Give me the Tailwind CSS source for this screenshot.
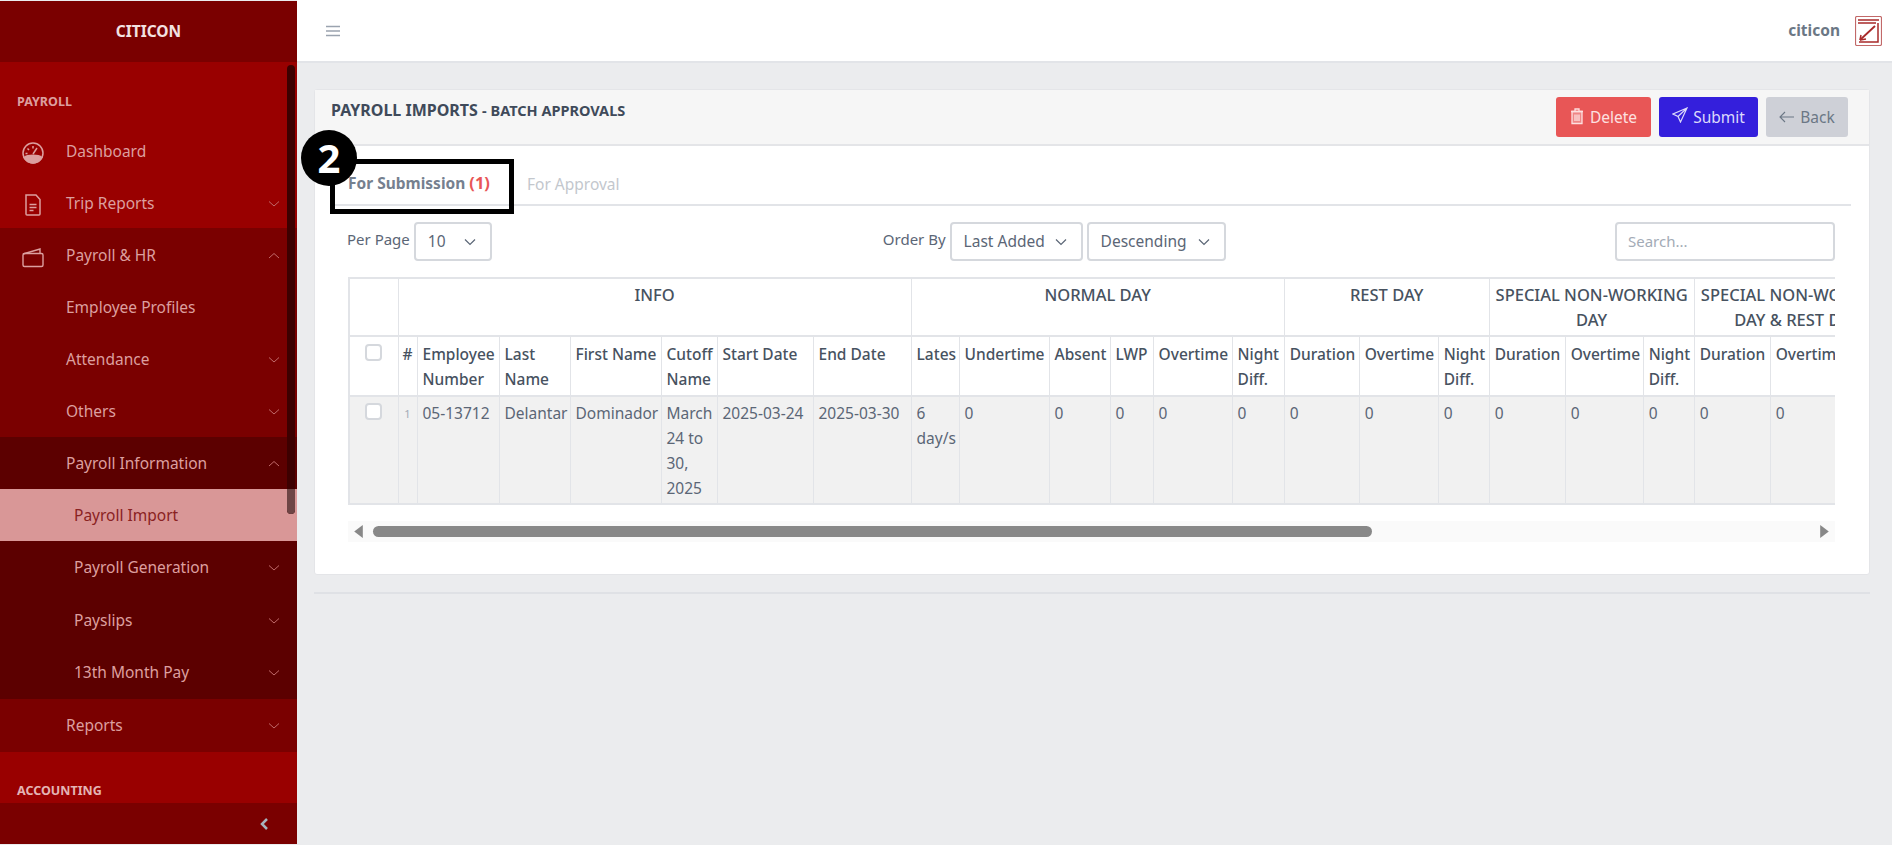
<!DOCTYPE html>
<html lang="en">
<head>
  <meta charset="UTF-8" />
  <title>Payroll Imports</title>
  <script src="https://cdn.jsdelivr.net/npm/@tailwindcss/browser@4"></script>
</head>
<body class="bg-[#ebecee] font-['Noto_Sans',sans-serif] h-[845px] w-[1892px] overflow-hidden">
  <div class="flex h-[845px]">

    <!-- Sidebar -->
    <aside class="relative w-[297px] shrink-0 h-[843px] mt-px bg-[#990000] text-[15.5px] text-[#dc9f9f] overflow-hidden">
      <div class="h-[61px] bg-[#7a0000] flex items-center justify-center font-bold text-[#f3e2e2] text-[15.5px]">CITICON</div>

      <div class="h-[62px] pl-[17px] pt-[32px] text-[12.5px] font-bold leading-[16px]">PAYROLL</div>
      <a class="h-[52px] pt-[3px] flex items-center">
        <svg class="w-[24px] h-[24px] ml-[21px] mr-[21px] mt-[3px]" viewBox="0 0 24 24" fill="none" stroke="currentColor" stroke-width="1.5">
          <circle cx="12" cy="12" r="10" />
          <path d="M3 16.500c4-3 14-3 18 0-2 3.500-5 5.500-9 5.500s-7-2-9-5.500z" fill="currentColor" />
          <path d="M12 13l4-6M12 5v2.500M6.500 7.500l1.500 1.500M4.500 12.500h2" />
        </svg>
        <span>Dashboard</span>
      </a>
      <a class="h-[52px] pt-[3px] flex items-center">
        <svg class="w-[24px] h-[24px] ml-[21px] mr-[21px] mt-[3px]" viewBox="0 0 24 24" fill="none" stroke="currentColor" stroke-width="1.5">
          <path d="M5 2h10l4 4.500V21a1 1 0 0 1-1 1H6a1 1 0 0 1-1-1z" />
          <path d="M8.500 11.500h7M8.500 14.500h7M8.500 17.500h4" />
        </svg>
        <span>Trip Reports</span>
        <svg class="ml-auto mr-[16px] w-[14px] h-[14px] text-[#c06a6a]" viewBox="0 0 14 14" fill="none" stroke="currentColor"><path d="M2 4.500l5 4.500 5-4.500" /></svg>
      </a>

      <div class="bg-[#7a0000]">
        <a class="h-[52px] pt-[3px] flex items-center">
          <svg class="w-[24px] h-[24px] ml-[21px] mr-[21px] mt-[3px]" viewBox="0 0 24 24" fill="none" stroke="currentColor" stroke-width="1.4">
            <path d="M2 9l17-5v4" />
            <rect x="2" y="8.500" width="20" height="13" rx="1.500" />
          </svg>
          <span>Payroll &amp; HR</span>
          <svg class="ml-auto mr-[16px] w-[14px] h-[14px] text-[#c06a6a]" viewBox="0 0 14 14" fill="none" stroke="currentColor"><path d="M2 9l5-4.500 5 4.500" /></svg>
        </a>
        <a class="h-[52px] pt-[3px] flex items-center pl-[66px]">Employee Profiles</a>
        <a class="h-[52px] pt-[3px] flex items-center pl-[66px]">
          <span>Attendance</span>
          <svg class="ml-auto mr-[16px] w-[14px] h-[14px] text-[#c06a6a]" viewBox="0 0 14 14" fill="none" stroke="currentColor"><path d="M2 4.500l5 4.500 5-4.500" /></svg>
        </a>
        <a class="h-[53px] pt-[3px] flex items-center pl-[66px]">
          <span>Others</span>
          <svg class="ml-auto mr-[16px] w-[14px] h-[14px] text-[#c06a6a]" viewBox="0 0 14 14" fill="none" stroke="currentColor"><path d="M2 4.500l5 4.500 5-4.500" /></svg>
        </a>

        <div class="bg-[#5c0000]">
          <a class="h-[52px] pt-[2px] flex items-center pl-[66px]">
            <span>Payroll Information</span>
            <svg class="ml-auto mr-[16px] w-[14px] h-[14px] text-[#c06a6a]" viewBox="0 0 14 14" fill="none" stroke="currentColor"><path d="M2 9l5-4.500 5 4.500" /></svg>
          </a>
          <a class="h-[52px] pt-[2px] flex items-center pl-[74px] bg-[#d99797] text-[#8a2222]">Payroll Import</a>
          <a class="h-[53px] flex items-center pl-[74px]">
            <span>Payroll Generation</span>
            <svg class="ml-auto mr-[16px] w-[14px] h-[14px] text-[#c06a6a]" viewBox="0 0 14 14" fill="none" stroke="currentColor"><path d="M2 4.500l5 4.500 5-4.500" /></svg>
          </a>
          <a class="h-[52px] pt-[2px] flex items-center pl-[74px]">
            <span>Payslips</span>
            <svg class="ml-auto mr-[16px] w-[14px] h-[14px] text-[#c06a6a]" viewBox="0 0 14 14" fill="none" stroke="currentColor"><path d="M2 4.500l5 4.500 5-4.500" /></svg>
          </a>
          <a class="h-[53px] flex items-center pl-[74px]">
            <span>13th Month Pay</span>
            <svg class="ml-auto mr-[16px] w-[14px] h-[14px] text-[#c06a6a]" viewBox="0 0 14 14" fill="none" stroke="currentColor"><path d="M2 4.500l5 4.500 5-4.500" /></svg>
          </a>
        </div>

        <a class="h-[53px] flex items-center pl-[66px]">
          <span>Reports</span>
          <svg class="ml-auto mr-[16px] w-[14px] h-[14px] text-[#c06a6a]" viewBox="0 0 14 14" fill="none" stroke="currentColor"><path d="M2 4.500l5 4.500 5-4.500" /></svg>
        </a>
      </div>

      <div class="pl-[17px] pt-[31px] text-[12.5px] font-bold leading-[16px] text-[#e4b4b4]">ACCOUNTING</div>

      <!-- pinned collapse bar -->
      <div class="absolute bottom-0 left-0 right-0 h-[41px] bg-[#7a0000] flex items-center justify-end pr-[27px]">
        <svg class="w-[12px] h-[14px] text-[#a7b3bd]" viewBox="0 0 12 14" fill="none" stroke="currentColor" stroke-width="2.500"><path d="M9 2L4 7l5 5" /></svg>
      </div>

      <!-- sidebar scrollbar -->
      <div class="absolute top-[64px] right-[2px] w-[8px] h-[449px] rounded-full bg-[#3d0000]"></div>
      <div class="absolute top-[488px] right-[2px] w-[8px] h-[25px] rounded-b-full bg-[#6e4545]"></div>
    </aside>

    <!-- Main -->
    <main class="flex-1 min-w-0 flex flex-col">
      <header class="h-[63px] shrink-0 bg-white border-b-2 border-[#e2e4e8] flex items-center pl-[29px] pr-[10px]">
        <svg class="w-[14px] h-[12px] text-[#9aa3af]" viewBox="0 0 14 12" fill="none" stroke="currentColor" stroke-width="1.500"><path d="M0 1.500h14M0 6h14M0 10.500h14" /></svg>
        <span class="ml-auto font-bold text-[#6b7785] text-[15.5px]">citicon</span>
        <svg class="ml-[15px] w-[27px] h-[30px] text-[#a82a2a]" viewBox="0 0 27 30" fill="none" stroke="currentColor">
          <rect x="0.500" y="0.500" width="26" height="29" rx="1.500" stroke-width="1.200" stroke-opacity="0.700" />
          <path d="M3 4h21M3 7h18M23 7v19H4" stroke-width="1.500" />
          <path d="M5 24L20 10" stroke-width="1.800" />
          <path d="M5 24l1-5M5 24l6-1" stroke-width="1.500" />
        </svg>
      </header>

      <div class="pt-[26px] pl-[17px] pr-[22px]">
        <section class="h-[486px] bg-white rounded-[3px] border border-[#e4e5e8]">
          <div class="h-[56px] bg-[#f6f6f6] border-b-2 border-[#e4e5e8] flex pl-[16px] pr-[21px] pt-[7px]">
            <h1 class="font-bold text-[#3f4a5a] text-[16px] leading-[20px] pt-[3px]">PAYROLL IMPORTS <span class="text-[14.5px]">- BATCH APPROVALS</span></h1>
            <div class="ml-auto flex gap-[8px] text-[15.5px]">
              <button class="h-[40px] w-[95px] pt-[2px] rounded-[3px] bg-[#e85656] text-[#fde0e0] flex items-center justify-center gap-[6px]">
                <svg class="w-[14px] h-[18px] -mt-[5px]" viewBox="0 0 14 17" fill="none" stroke="currentColor" stroke-width="1.300">
                  <path d="M1 4h12M5 4V1.500h4V4" />
                  <path d="M2 4h10v12H2z" fill="currentColor" fill-opacity="0.350" />
                  <path d="M5 7v6.500M7 7v6.500M9 7v6.500" />
                </svg>
                Delete
              </button>
              <button class="h-[40px] w-[99px] pt-[2px] rounded-[3px] bg-[#341fdc] text-[#dcd9fb] flex items-center justify-center gap-[5px]">
                <svg class="w-[16px] h-[16px] -mt-[6px]" viewBox="0 0 16 16" fill="none" stroke="currentColor" stroke-width="1.200">
                  <path d="M15 1L1 7l5 2.500 2.500 5.500zM15 1L6 9.500" />
                </svg>
                Submit
              </button>
              <button class="h-[40px] w-[82px] pt-[2px] rounded-[3px] bg-[#ced0d7] text-[#6b7785] flex items-center justify-center gap-[6px]">
                <svg class="w-[15px] h-[12px] -mt-[2px]" viewBox="0 0 15 12" fill="none" stroke="currentColor" stroke-width="1.100"><path d="M15 6H1M6 1L1 6l5 5" /></svg>
                Back
              </button>
            </div>
          </div>

          <div class="relative pl-[16px] pr-[18px]">
            <!-- tabs -->
            <div class="h-[60px] border-b-2 border-[#e2e4e8] flex items-end text-[15.5px]">
              <span class="pl-[17px] pb-[8px] w-[196px] font-bold text-[#75808f]">For Submission <span class="text-[16.5px] text-[#e85656]">(1)</span></span>
              <span class="pb-[8px] text-[#c3c7cd]">For Approval</span>
            </div>

            <!-- annotation over the tab -->
            <div class="absolute top-[13px] left-[15px] w-[184px] h-[55px] border-[5px] border-black"></div>
            <div class="absolute -top-[16px] -left-[14px] w-[56px] h-[56px] rounded-full bg-black text-white flex items-center justify-center font-bold text-[40px] leading-none">2</div>

            <!-- filters -->
            <div class="flex items-center h-[38px] mt-[16px] ml-[17px] mr-[16px] text-[15px] text-[#5b6676]">
              <span class="-mt-[3px] mr-[4px] -ml-px">Per Page</span>
              <div class="w-[78px] h-[39px] pt-[2px] border-2 border-[#d5d8dd] rounded-[4px] flex items-center pl-[12px] pr-[14px] text-[15.5px]">
                <span>10</span>
                <svg class="ml-auto w-[12px] h-[8px]" viewBox="0 0 12 8" fill="none" stroke="currentColor" stroke-width="1.200"><path d="M1 1.500l5 5 5-5" /></svg>
              </div>
              <span class="ml-[391px] -mt-[3px] mr-[4px]">Order By</span>
              <div class="w-[133px] h-[39px] pt-[2px] border-2 border-[#d5d8dd] rounded-[4px] flex items-center pl-[12px] pr-[14px] text-[15.5px]">
                <span>Last Added</span>
                <svg class="ml-auto w-[12px] h-[8px]" viewBox="0 0 12 8" fill="none" stroke="currentColor" stroke-width="1.200"><path d="M1 1.500l5 5 5-5" /></svg>
              </div>
              <div class="ml-[4px] w-[139px] h-[39px] pt-[2px] border-2 border-[#d5d8dd] rounded-[4px] flex items-center pl-[12px] pr-[14px] text-[15.5px]">
                <span>Descending</span>
                <svg class="ml-auto w-[12px] h-[8px]" viewBox="0 0 12 8" fill="none" stroke="currentColor" stroke-width="1.200"><path d="M1 1.500l5 5 5-5" /></svg>
              </div>
              <div class="ml-auto w-[220px] h-[39px] border-2 border-[#d5d8dd] rounded-[4px] flex items-center pl-[11px] text-[#a3abb6]">Search...</div>
            </div>

            <!-- table -->
            <div class="mt-[17px] ml-[17px] mr-[16px] overflow-hidden">
              <table class="table-fixed border-collapse w-[1551px] text-[15.5px] leading-[25px] text-[#5b6676] border-2 border-[#e2e4e8]">
                <colgroup>
                  <col class="w-[49px]" />
                  <col class="w-[19px]" />
                  <col class="w-[82px]" />
                  <col class="w-[71px]" />
                  <col class="w-[91px]" />
                  <col class="w-[56px]" />
                  <col class="w-[96px]" />
                  <col class="w-[98px]" />
                  <col class="w-[48px]" />
                  <col class="w-[90px]" />
                  <col class="w-[61px]" />
                  <col class="w-[43px]" />
                  <col class="w-[79px]" />
                  <col class="w-[52px]" />
                  <col class="w-[75px]" />
                  <col class="w-[79px]" />
                  <col class="w-[51px]" />
                  <col class="w-[76px]" />
                  <col class="w-[78px]" />
                  <col class="w-[51px]" />
                  <col class="w-[76px]" />
                  <col class="w-[79px]" />
                  <col class="w-[51px]" />
                </colgroup>
                <thead class="text-[#47525f] font-medium">
                  <tr class="h-[58px] align-top text-center text-[16.5px]">
                    <th class="border border-[#e2e4e8] font-medium"></th>
                    <th colspan="7" class="border border-[#e2e4e8] font-medium pt-[3px]">INFO</th>
                    <th colspan="6" class="border border-[#e2e4e8] font-medium pt-[3px]">NORMAL DAY</th>
                    <th colspan="3" class="border border-[#e2e4e8] font-medium pt-[3px]">REST DAY</th>
                    <th colspan="3" class="border border-[#e2e4e8] font-medium pt-[3px]">SPECIAL NON-WORKING DAY</th>
                    <th colspan="3" class="border border-[#e2e4e8] font-medium pt-[3px]">SPECIAL NON-WORKING DAY &amp; REST DAY</th>
                  </tr>
                  <tr class="h-[60px] align-top text-left border-y-2 border-[#e2e4e8]">
                    <th class="border border-[#e2e4e8] pt-[5px] text-center font-medium"><span class="inline-block w-[17px] h-[17px] mt-[2px] rounded-[4px] border-2 border-[#d5d8dd] bg-white"></span></th>
                    <th class="border border-[#e2e4e8] pt-[5px] text-center font-medium">#</th>
                    <th class="border border-[#e2e4e8] pt-[5px] pl-[5px] pr-[3px] font-medium">Employee Number</th>
                    <th class="border border-[#e2e4e8] pt-[5px] pl-[5px] pr-[3px] font-medium">Last Name</th>
                    <th class="border border-[#e2e4e8] pt-[5px] pl-[5px] pr-[3px] font-medium">First Name</th>
                    <th class="border border-[#e2e4e8] pt-[5px] pl-[5px] pr-[3px] font-medium">Cutoff Name</th>
                    <th class="border border-[#e2e4e8] pt-[5px] pl-[5px] pr-[3px] font-medium">Start Date</th>
                    <th class="border border-[#e2e4e8] pt-[5px] pl-[5px] pr-[3px] font-medium">End Date</th>
                    <th class="border border-[#e2e4e8] pt-[5px] pl-[5px] pr-[3px] font-medium">Lates</th>
                    <th class="border border-[#e2e4e8] pt-[5px] pl-[5px] pr-[3px] font-medium">Undertime</th>
                    <th class="border border-[#e2e4e8] pt-[5px] pl-[5px] pr-[3px] font-medium">Absent</th>
                    <th class="border border-[#e2e4e8] pt-[5px] pl-[5px] pr-[3px] font-medium">LWP</th>
                    <th class="border border-[#e2e4e8] pt-[5px] pl-[5px] pr-[3px] font-medium">Overtime</th>
                    <th class="border border-[#e2e4e8] pt-[5px] pl-[5px] pr-[3px] font-medium">Night Diff.</th>
                    <th class="border border-[#e2e4e8] pt-[5px] pl-[5px] pr-[3px] font-medium">Duration</th>
                    <th class="border border-[#e2e4e8] pt-[5px] pl-[5px] pr-[3px] font-medium">Overtime</th>
                    <th class="border border-[#e2e4e8] pt-[5px] pl-[5px] pr-[3px] font-medium">Night Diff.</th>
                    <th class="border border-[#e2e4e8] pt-[5px] pl-[5px] pr-[3px] font-medium">Duration</th>
                    <th class="border border-[#e2e4e8] pt-[5px] pl-[5px] pr-[3px] font-medium">Overtime</th>
                    <th class="border border-[#e2e4e8] pt-[5px] pl-[5px] pr-[3px] font-medium">Night Diff.</th>
                    <th class="border border-[#e2e4e8] pt-[5px] pl-[5px] pr-[3px] font-medium">Duration</th>
                    <th class="border border-[#e2e4e8] pt-[5px] pl-[5px] pr-[3px] font-medium">Overtime</th>
                    <th class="border border-[#e2e4e8] pt-[5px] pl-[5px] pr-[3px] font-medium">Night Diff.</th>
                  </tr>
                </thead>
                <tbody>
                  <tr class="h-[108px] align-top bg-[#f1f1f1]">
                    <td class="border border-[#e2e4e8] pt-[4px] text-center"><span class="inline-block w-[17px] h-[17px] mt-[2px] rounded-[4px] border-2 border-[#d5d8dd] bg-white"></span></td>
                    <td class="border border-[#e2e4e8] pt-[4px] text-center text-[11px] text-[#a3abb6]">1</td>
                    <td class="border border-[#e2e4e8] pt-[4px] pl-[5px] pr-[3px]">05-13712</td>
                    <td class="border border-[#e2e4e8] pt-[4px] pl-[5px] pr-[3px]">Delantar</td>
                    <td class="border border-[#e2e4e8] pt-[4px] pl-[5px] pr-[3px]">Dominador</td>
                    <td class="border border-[#e2e4e8] pt-[4px] pl-[5px] pr-[3px]">March 24 to 30, 2025</td>
                    <td class="border border-[#e2e4e8] pt-[4px] pl-[5px] pr-[3px]">2025-03-24</td>
                    <td class="border border-[#e2e4e8] pt-[4px] pl-[5px] pr-[3px]">2025-03-30</td>
                    <td class="border border-[#e2e4e8] pt-[4px] pl-[5px] pr-[3px]">6 day/s</td>
                    <td class="border border-[#e2e4e8] pt-[4px] pl-[5px] pr-[3px]">0</td>
                    <td class="border border-[#e2e4e8] pt-[4px] pl-[5px] pr-[3px]">0</td>
                    <td class="border border-[#e2e4e8] pt-[4px] pl-[5px] pr-[3px]">0</td>
                    <td class="border border-[#e2e4e8] pt-[4px] pl-[5px] pr-[3px]">0</td>
                    <td class="border border-[#e2e4e8] pt-[4px] pl-[5px] pr-[3px]">0</td>
                    <td class="border border-[#e2e4e8] pt-[4px] pl-[5px] pr-[3px]">0</td>
                    <td class="border border-[#e2e4e8] pt-[4px] pl-[5px] pr-[3px]">0</td>
                    <td class="border border-[#e2e4e8] pt-[4px] pl-[5px] pr-[3px]">0</td>
                    <td class="border border-[#e2e4e8] pt-[4px] pl-[5px] pr-[3px]">0</td>
                    <td class="border border-[#e2e4e8] pt-[4px] pl-[5px] pr-[3px]">0</td>
                    <td class="border border-[#e2e4e8] pt-[4px] pl-[5px] pr-[3px]">0</td>
                    <td class="border border-[#e2e4e8] pt-[4px] pl-[5px] pr-[3px]">0</td>
                    <td class="border border-[#e2e4e8] pt-[4px] pl-[5px] pr-[3px]">0</td>
                    <td class="border border-[#e2e4e8] pt-[4px] pl-[5px] pr-[3px]">0</td>
                  </tr>
                </tbody>
              </table>
            </div>

            <!-- horizontal scrollbar -->
            <div class="mt-[16px] ml-[17px] mr-[16px] h-[21px] bg-[#fafafa] flex items-center pl-[5px] pr-[5px]">
              <svg class="w-[11px] h-[15px] text-[#888888]" viewBox="0 0 10 14" fill="currentColor"><path d="M9 1v12L1 7z" /></svg>
              <div class="ml-[9px] w-[999px] h-[11px] rounded-full bg-[#888888]"></div>
              <svg class="ml-auto w-[11px] h-[15px] text-[#888888]" viewBox="0 0 10 14" fill="currentColor"><path d="M1 1v12l8-6z" /></svg>
            </div>
          </div>
        </section>

        <div class="mt-[17px] h-[2px] bg-[#dfe1e5]"></div>
      </div>
    </main>
  </div>
</body>
</html>
